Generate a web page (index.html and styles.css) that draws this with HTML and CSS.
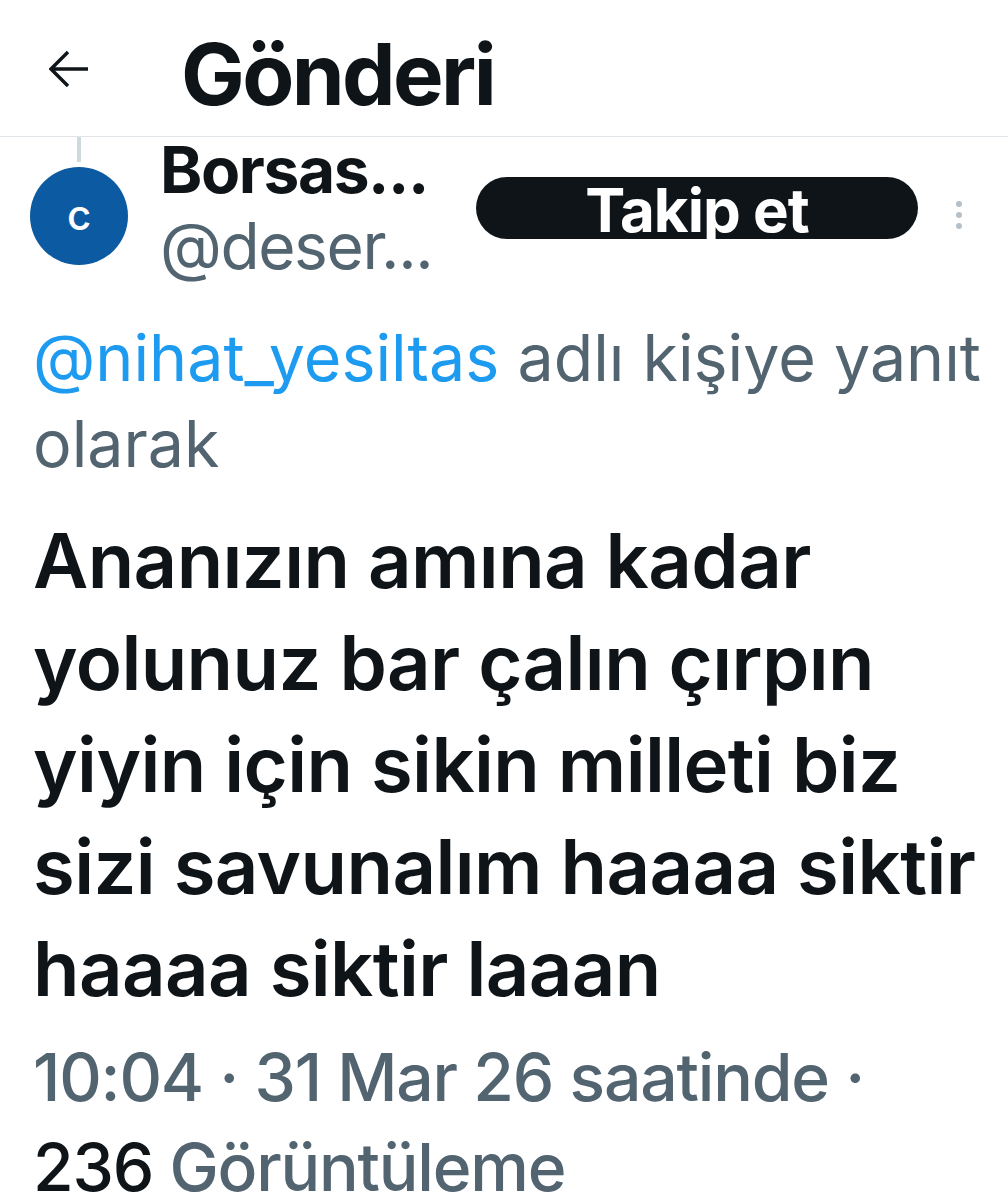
FILE: index.html
```html
<!DOCTYPE html>
<html lang="tr">
<head>
<meta charset="utf-8">
<title>Gönderi</title>
<link rel="stylesheet" href="styles.css">
</head>
<body>
<header class="topbar">
  <svg class="back" viewBox="0 0 40 38" width="40" height="38" aria-hidden="true">
    <path d="M39 19H3M19 2L2 19l17 17" fill="none" stroke="#0f1419" stroke-width="3.4"/>
  </svg>
  <h1 class="title">Gönderi</h1>
</header>
<main class="post">
  <div class="author">
    <div class="avatar-col">
      <div class="thread"></div>
      <div class="avatar">c</div>
    </div>
    <div class="names">
      <div class="name">Borsas...</div>
      <div class="handle">@deser...</div>
    </div>
    <button class="follow">Takip et</button>
    <div class="more"><span></span><span></span><span></span></div>
  </div>
  <p class="reply"><span class="mention">@nihat_yesiltas</span> adlı kişiye yanıt olarak</p>
  <p class="text">Ananızın amına kadar yolunuz bar çalın çırpın yiyin için sikin milleti biz sizi savunalım haaaa siktir haaaa siktir laaan</p>
  <p class="meta">10:04 · 31 Mar 26 saatinde · <span class="views"><span class="count">236</span> Görüntüleme</span></p>
</main>
</body>
</html>
```
FILE: styles.css
```css
* { box-sizing: border-box; }
html, body { margin: 0; padding: 0; background: #fff; }
body {
  font-family: Inter, "Noto Sans", "Liberation Sans", sans-serif;
  color: #0f1419;
  width: 1008px;
  overflow: hidden;
}
.topbar {
  height: 137px;
  display: flex;
  align-items: center;
  padding-left: 49px;
  border-bottom: 1px solid #dfe5e9;
}
.back { display: block; margin-top: 2px; }
.title {
  margin: 12px 0 0 92px;
  font-size: 85px;
  font-weight: 700;
  letter-spacing: -2.6px;
  line-height: 1;
}
.post { padding: 0 20px 0 33px; }
.author {
  display: flex;
  align-items: flex-start;
}
.avatar-col {
  width: 98px;
  margin-left: -3px;
  display: flex;
  flex-direction: column;
  align-items: center;
}
.thread {
  width: 4px;
  height: 25px;
  background: #cfd9de;
}
.avatar {
  margin-top: 5px;
  width: 98px;
  height: 98px;
  border-radius: 50%;
  background: #0c5aa2;
  color: #fff;
  font-size: 42px;
  font-weight: 500;
  display: flex;
  align-items: center;
  justify-content: center;
  padding-bottom: 4px;
}
.names {
  margin-left: 32px;
  width: 316px;
}
.name {
  font-size: 64px;
  font-weight: 700;
  line-height: 66px;
  letter-spacing: -1.4px;
}
.handle {
  font-size: 64px;
  color: #536471;
  line-height: 86px;
  letter-spacing: -1.4px;
}
.follow {
  margin-top: 40px;
  width: 442px;
  height: 62px;
  border: 0;
  border-radius: 31px;
  background: #0f1419;
  color: #fff;
  font-family: inherit;
  font-size: 60px;
  font-weight: 700;
  line-height: 40px;
  letter-spacing: -1px;
  padding: 4px 0 0;
  display: flex;
  align-items: center;
  justify-content: center;
  overflow: visible;
}
.more {
  margin-left: 38px;
  margin-top: 64px;
  display: flex;
  flex-direction: column;
  gap: 5px;
}
.more span {
  width: 6px;
  height: 6px;
  border-radius: 50%;
  background: #b5c0c8;
}
.reply {
  margin: 26px 0 0;
  font-size: 64.5px;
  line-height: 86px;
  color: #536471;
  letter-spacing: 0;
}
.mention { color: #1d9bf0; }
.text {
  margin: 22px 0 0;
  font-size: 76px;
  line-height: 102px;
  font-weight: 600;
  letter-spacing: -0.6px;
}
.meta {
  margin: 13px 0 0;
  font-size: 66px;
  line-height: 90px;
  color: #536471;
  letter-spacing: -1.2px;
  font-weight: 500;
}
.views { white-space: nowrap; }
.count { color: #0f1419; }
```
